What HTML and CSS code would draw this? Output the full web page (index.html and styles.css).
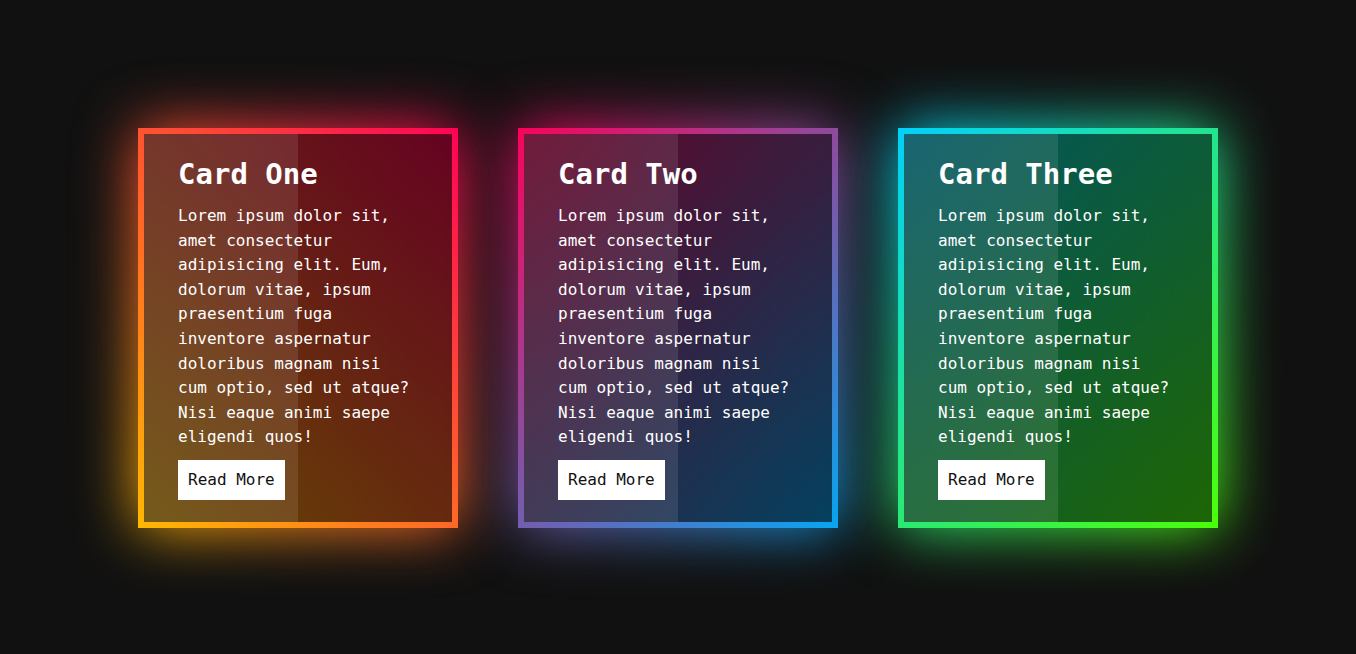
FILE: index.html
```html
<!DOCTYPE html>
<html lang="en">
<head>
<meta charset="utf-8">
<title>Glow Cards</title>
<link rel="stylesheet" href="styles.css">
</head>
<body>
<div class="cards">
  <div class="box box-one">
    <span class="panel"></span>
    <div class="content">
      <h2>Card One</h2>
      <p>Lorem ipsum dolor sit, amet consectetur adipisicing elit. Eum, dolorum vitae, ipsum praesentium fuga inventore aspernatur doloribus magnam nisi cum optio, sed ut atque? Nisi eaque animi saepe eligendi quos!</p>
      <a href="#" class="btn">Read More</a>
    </div>
  </div>
  <div class="box box-two">
    <span class="panel"></span>
    <div class="content">
      <h2>Card Two</h2>
      <p>Lorem ipsum dolor sit, amet consectetur adipisicing elit. Eum, dolorum vitae, ipsum praesentium fuga inventore aspernatur doloribus magnam nisi cum optio, sed ut atque? Nisi eaque animi saepe eligendi quos!</p>
      <a href="#" class="btn">Read More</a>
    </div>
  </div>
  <div class="box box-three">
    <span class="panel"></span>
    <div class="content">
      <h2>Card Three</h2>
      <p>Lorem ipsum dolor sit, amet consectetur adipisicing elit. Eum, dolorum vitae, ipsum praesentium fuga inventore aspernatur doloribus magnam nisi cum optio, sed ut atque? Nisi eaque animi saepe eligendi quos!</p>
      <a href="#" class="btn">Read More</a>
    </div>
  </div>
</div>
</body>
</html>
```
FILE: styles.css
```css
* { margin: 0; padding: 0; box-sizing: border-box; }
html, body { height: 100%; }
body {
  background: #111;
  font-family: "DejaVu Sans Mono", "Liberation Mono", monospace;
  display: flex;
  justify-content: center;
  align-items: center;
  overflow: hidden;
}
.cards {
  display: flex;
  gap: 60px;
  transform: translateY(1px);
}
.box {
  position: relative;
  width: 320px;
  height: 400px;
  display: flex;
  justify-content: flex-start;
  align-items: center;
}
.box::before,
.box::after {
  content: "";
  position: absolute;
  inset: 0;
  background: var(--grad);
}
.box::after {
  filter: blur(30px);
}
.box-one { --grad: linear-gradient(45deg, #ffbc00, #ff0058); }
.box-two { --grad: linear-gradient(315deg, #03a9f4, #ff0058); }
.box-three { --grad: linear-gradient(315deg, #4dff03, #00d0ff); }
.panel {
  position: absolute;
  inset: 6px;
  background: rgba(0, 0, 0, 0.6);
  z-index: 2;
}
.panel::before {
  content: "";
  position: absolute;
  top: 0;
  left: 0;
  width: 154px;
  height: 100%;
  background: rgba(255, 255, 255, 0.1);
}
.content {
  position: relative;
  z-index: 10;
  padding: 20px 40px;
  color: #fff;
}
.content h2 {
  font-size: 29px;
  line-height: 37px;
  font-weight: 700;
  margin-bottom: 11px;
}
.content p {
  font-size: 16px;
  line-height: 24.6px;
  margin-bottom: 10px;
}
.btn {
  display: inline-block;
  font-size: 16px;
  line-height: 20px;
  color: #111;
  background: #fff;
  padding: 10px;
  text-decoration: none;
}
```
